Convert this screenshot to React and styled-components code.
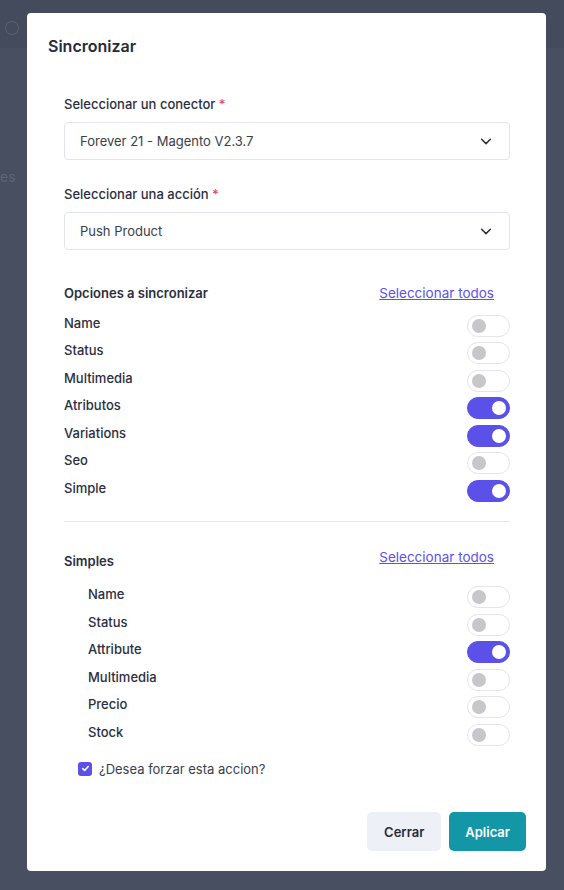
import React from 'react'
import styled, { createGlobalStyle } from 'styled-components'

const Global = createGlobalStyle`
    html, body {
        margin: 0;
        padding: 0;
        background: #484f61;
        font-family: Inter, "Noto Sans", sans-serif;
        color: #2b2e3f;
    }
`

const Fondo = styled.div`
    position: relative;
    width: 564px;
    height: 890px;
    overflow: hidden;
    background: #484f61;
    padding: 13px 18px 0 27px;
    box-sizing: border-box;
`

const BarraFondo = styled.div`
    position: absolute;
    top: 0;
    left: 0;
    right: 0;
    height: 48px;
    background: #444b5c;
`

const TextoFondo = styled.span`
    position: absolute;
    left: 0;
    top: 168px;
    font-size: 14px;
    color: #5d6475;
`

const IconoFondo = styled.div`
    position: absolute;
    left: 5px;
    top: 21px;
    width: 12px;
    height: 12px;
    border: 1px solid #5a6172;
    border-radius: 50%;
`

const Modal = styled.div`
    position: relative;
    width: 519px;
    height: 858px;
    background: #fff;
    border-radius: 4px;
    box-sizing: border-box;
    display: flex;
    flex-direction: column;
`

const Titulo = styled.h2`
    margin: 0;
    padding: 23px 21px 0;
    font-size: 16px;
    font-weight: 600;
    line-height: 20px;
    color: #262a3a;
`

const Cuerpo = styled.div`
    padding: 39px 36px 0 37px;
    display: flex;
    flex-direction: column;
`

const Etiqueta = styled.label`
    display: block;
    font-size: 13px;
    font-weight: 500;
    line-height: 18px;
    margin-bottom: 9px;
    span {
        color: #f1416c;
    }
`

const Campo = styled.div`
    margin-bottom: 25px;
`

const Selector = styled.div`
    height: 38px;
    border: 1px solid #e1e3ef;
    border-radius: 4px;
    box-sizing: border-box;
    display: flex;
    align-items: center;
    justify-content: space-between;
    padding: 0 16px 0 15px;
    font-size: 13px;
    color: #3a3d4c;
`

const Cabecera = styled.div`
    display: flex;
    justify-content: space-between;
    align-items: center;
    margin-top: ${p => p.top || 0}px;
    margin-bottom: ${p => p.bottom || 0}px;
`

const Subtitulo = styled.h3`
    margin: 0;
    font-size: 13px;
    font-weight: 600;
    line-height: 18px;
    position: relative;
    top: ${p => p.shift || 0}px;
`

const Enlace = styled.a`
    font-size: 13.5px;
    color: #5b4ff0;
    text-decoration: underline;
    margin-right: 16px;
    cursor: pointer;
`

const Fila = styled.div`
    display: flex;
    justify-content: space-between;
    align-items: center;
    height: 27.5px;
    padding-left: ${p => p.indent || 0}px;
`

const Nombre = styled.span`
    font-size: 13px;
    font-weight: 500;
    position: relative;
    top: -1px;
`

const Interruptor = styled.div`
    width: 43px;
    height: 22px;
    border-radius: 11px;
    box-sizing: border-box;
    border: 1px solid ${p => p.on ? '#5b50e8' : '#e3e4ee'};
    background: ${p => p.on ? '#5b50e8' : '#fff'};
    position: relative;
    top: 2px;
    &::after {
        content: '';
        position: absolute;
        top: 3px;
        left: ${p => p.on ? '24px' : '4px'};
        width: 14px;
        height: 14px;
        border-radius: 50%;
        background: ${p => p.on ? '#fff' : '#c6c6cb'};
    }
`

const Divisor = styled.hr`
    border: none;
    border-top: 1px solid #e6e7ec;
    margin: 18px 0 0;
`

const Casilla = styled.label`
    display: flex;
    align-items: center;
    gap: 7px;
    margin: 14px 0 0 14px;
    font-size: 13px;
    color: #3a3d4c;
`

const Marca = styled.span`
    width: 14px;
    height: 14px;
    border-radius: 3px;
    background: #5b50e8;
    display: flex;
    align-items: center;
    justify-content: center;
`

const Pie = styled.div`
    margin-top: auto;
    display: flex;
    justify-content: flex-end;
    gap: 8px;
    padding: 0 20px 20px;
`

const Boton = styled.button`
    height: 39px;
    padding: 0 ${p => p.primario ? 16 : 17}px;
    border: none;
    border-radius: 5px;
    font-family: inherit;
    font-size: 13px;
    font-weight: 600;
    background: ${p => p.primario ? '#1396a6' : '#eef0f7'};
    color: ${p => p.primario ? '#fff' : '#262a3a'};
    cursor: pointer;
`

const Chevron = () => (
    <svg width="14" height="14" viewBox="0 0 16 16" fill="none" stroke="#333" strokeWidth="1.8" strokeLinecap="round" strokeLinejoin="round">
        <path d="M3 6l5 5 5-5" />
    </svg>
)

const opciones = [
    { nombre: 'Name', on: false },
    { nombre: 'Status', on: false },
    { nombre: 'Multimedia', on: false },
    { nombre: 'Atributos', on: true },
    { nombre: 'Variations', on: true },
    { nombre: 'Seo', on: false },
    { nombre: 'Simple', on: true },
]

const simples = [
    { nombre: 'Name', on: false },
    { nombre: 'Status', on: false },
    { nombre: 'Attribute', on: true },
    { nombre: 'Multimedia', on: false },
    { nombre: 'Precio', on: false },
    { nombre: 'Stock', on: false },
]

export default function App() {
    return (
        <Fondo>
            <Global />
            <BarraFondo />
            <IconoFondo />
            <TextoFondo>es</TextoFondo>
            <Modal>
                <Titulo>Sincronizar</Titulo>
                <Cuerpo>
                    <Campo>
                        <Etiqueta>Seleccionar un conector <span>*</span></Etiqueta>
                        <Selector>Forever 21 - Magento V2.3.7<Chevron /></Selector>
                    </Campo>
                    <Campo>
                        <Etiqueta>Seleccionar una acción <span>*</span></Etiqueta>
                        <Selector>Push Product<Chevron /></Selector>
                    </Campo>
                    <Cabecera top={9} bottom={8}>
                        <Subtitulo>Opciones a sincronizar</Subtitulo>
                        <Enlace>Seleccionar todos</Enlace>
                    </Cabecera>
                    {opciones.map(o => (
                        <Fila key={o.nombre}>
                            <Nombre>{o.nombre}</Nombre>
                            <Interruptor on={o.on} />
                        </Fila>
                    ))}
                    <Divisor />
                    <Cabecera top={26} bottom={16}>
                        <Subtitulo shift={4}>Simples</Subtitulo>
                        <Enlace>Seleccionar todos</Enlace>
                    </Cabecera>
                    {simples.map(o => (
                        <Fila key={o.nombre} indent={24}>
                            <Nombre>{o.nombre}</Nombre>
                            <Interruptor on={o.on} />
                        </Fila>
                    ))}
                    <Casilla>
                        <Marca>
                            <svg width="9" height="9" viewBox="0 0 10 10" fill="none" stroke="#fff" strokeWidth="1.8" strokeLinecap="round" strokeLinejoin="round">
                                <path d="M2 5.2l2 2 4-4.4" />
                            </svg>
                        </Marca>
                        ¿Desea forzar esta accion?
                    </Casilla>
                </Cuerpo>
                <Pie>
                    <Boton>Cerrar</Boton>
                    <Boton primario>Aplicar</Boton>
                </Pie>
            </Modal>
        </Fondo>
    )
}
